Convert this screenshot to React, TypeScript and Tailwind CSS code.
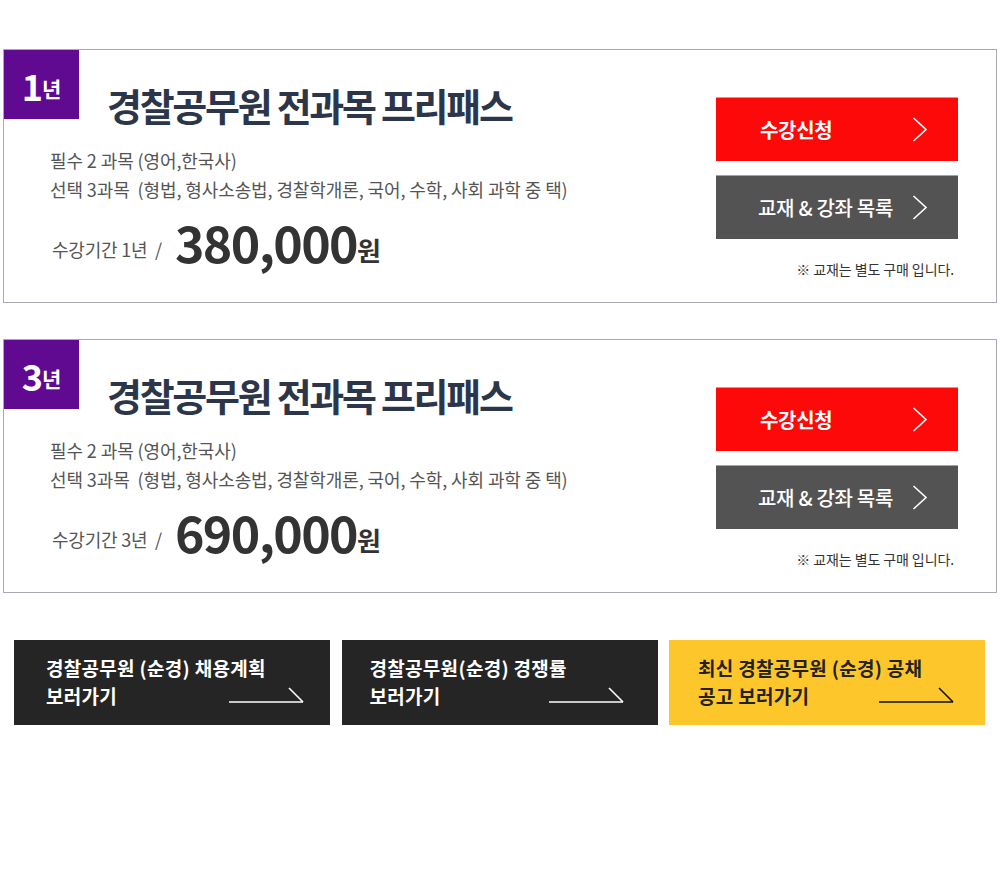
const kr = { fontFamily: '"Noto Sans CJK KR", "Noto Sans", sans-serif' };

type Plan = { years: string; price: string };

const plans: Plan[] = [
  { years: "1", price: "380,000" },
  { years: "3", price: "690,000" },
];

const Chevron = () => (
  <svg width="16" height="25" viewBox="0 0 16 25" fill="none">
    <polyline points="1.5,1 14,12.5 1.5,24" stroke="#ffffff" strokeWidth="1.6" />
  </svg>
);

const Arrow = ({ color }: { color: string }) => (
  <svg width="75" height="16" viewBox="0 0 75 16" fill="none">
    <line x1="0" y1="15" x2="74" y2="15" stroke={color} strokeWidth="1.6" />
    <line x1="60" y1="1" x2="74" y2="15" stroke={color} strokeWidth="1.6" />
  </svg>
);

const PlanCard = ({ plan }: { plan: Plan }) => (
  <div className="mx-[3px] flex h-[254px] border border-[#a9a8b5] bg-white">
    <div className="flex flex-1 flex-col">
      <div className="flex h-[69px] items-start">
        <div className="flex h-[69px] w-[75px] items-center justify-center bg-[#5f0a90] pt-[1px] text-white">
          <span className="text-[36px] leading-none font-bold tracking-[-1px]">{plan.years}</span>
          <span className="mt-[6px] text-[21px] leading-none font-bold">년</span>
        </div>
        <h2 className="mt-[33px] ml-[28px] text-[38px] leading-[44px] font-bold tracking-[-2.3px] whitespace-nowrap text-[#2c364a]">
          경찰공무원 전과목 프리패스
        </h2>
      </div>
      <div className="mt-[27px] pl-[46px] text-[18px] leading-[29px] tracking-[-0.1px] text-[#555555]">
        <p>필수 2 과목 (영어,한국사)</p>
        <p>선택 3과목&nbsp; (형법, 형사소송법, 경찰학개론, 국어, 수학, 사회 과학 중 택)</p>
      </div>
      <div className="mt-[12px] flex items-end pl-[48px]">
        <span className="mb-[8px] text-[18px] leading-none tracking-[-0.2px] text-[#555555]">
          수강기간 {plan.years}년&nbsp;&nbsp;/
        </span>
        <span className="ml-[13px] text-[50px] leading-none font-bold tracking-[-1.6px] text-[#333333]">
          {plan.price}
        </span>
        <span className="mb-[3px] text-[26px] leading-none font-bold text-[#333333]">원</span>
      </div>
    </div>
    <div className="mt-[47px] mr-[38px] flex w-[242px] flex-col">
      <button className="flex h-[64px] items-center justify-between border-t border-[#f28a8a] bg-[#fe0909] pr-[30px] pl-[44px] text-[20px] font-bold tracking-[-0.3px] text-white">
        <span>수강신청</span>
        <Chevron />
      </button>
      <button className="mt-[14px] flex h-[64px] items-center justify-between border-t border-[#a3a3a3] bg-[#535353] pr-[30px] pl-[42px] text-[20px] font-medium tracking-[-0.3px] text-white">
        <span>교재 &amp; 강좌 목록</span>
        <Chevron />
      </button>
      <p className="mt-[20px] pr-[4px] text-right text-[14px] tracking-[-0.1px] text-[#333333]">
        ※ 교재는 별도 구매 입니다.
      </p>
    </div>
  </div>
);

const links = [
  {
    lines: ["경찰공무원 (순경) 채용계획", "보러가기"],
    box: "bg-[#252525] text-white pl-[32px]",
    arrowPos: "right-[26px]",
    arrow: "#ffffff",
  },
  {
    lines: ["경찰공무원(순경) 경쟁률", "보러가기"],
    box: "bg-[#252525] text-white pl-[28px]",
    arrowPos: "right-[34px]",
    arrow: "#ffffff",
  },
  {
    lines: ["최신 경찰공무원 (순경) 공채", "공고 보러가기"],
    box: "bg-[#fdc62a] text-[#222222] pl-[29px]",
    arrowPos: "right-[31px]",
    arrow: "#111111",
  },
];

export default function App() {
  return (
    <div className="h-[871px] w-[1000px] bg-white pt-[49px]" style={kr}>
      <div className="flex flex-col gap-[36px]">
        {plans.map((plan) => (
          <PlanCard key={plan.years} plan={plan} />
        ))}
      </div>
      <div className="mt-[47px] grid grid-cols-3 gap-[11.5px] pr-[15px] pl-[14px]">
        {links.map((link, i) => (
          <a key={i} className={`relative block h-[85px] pt-[14px] ${link.box}`}>
            <div className="text-[19px] leading-[27.5px] font-bold tracking-[0.3px] whitespace-nowrap">
              <p>{link.lines[0]}</p>
              <p>{link.lines[1]}</p>
            </div>
            <div className={`absolute bottom-[22px] ${link.arrowPos}`}>
              <Arrow color={link.arrow} />
            </div>
          </a>
        ))}
      </div>
    </div>
  );
}
